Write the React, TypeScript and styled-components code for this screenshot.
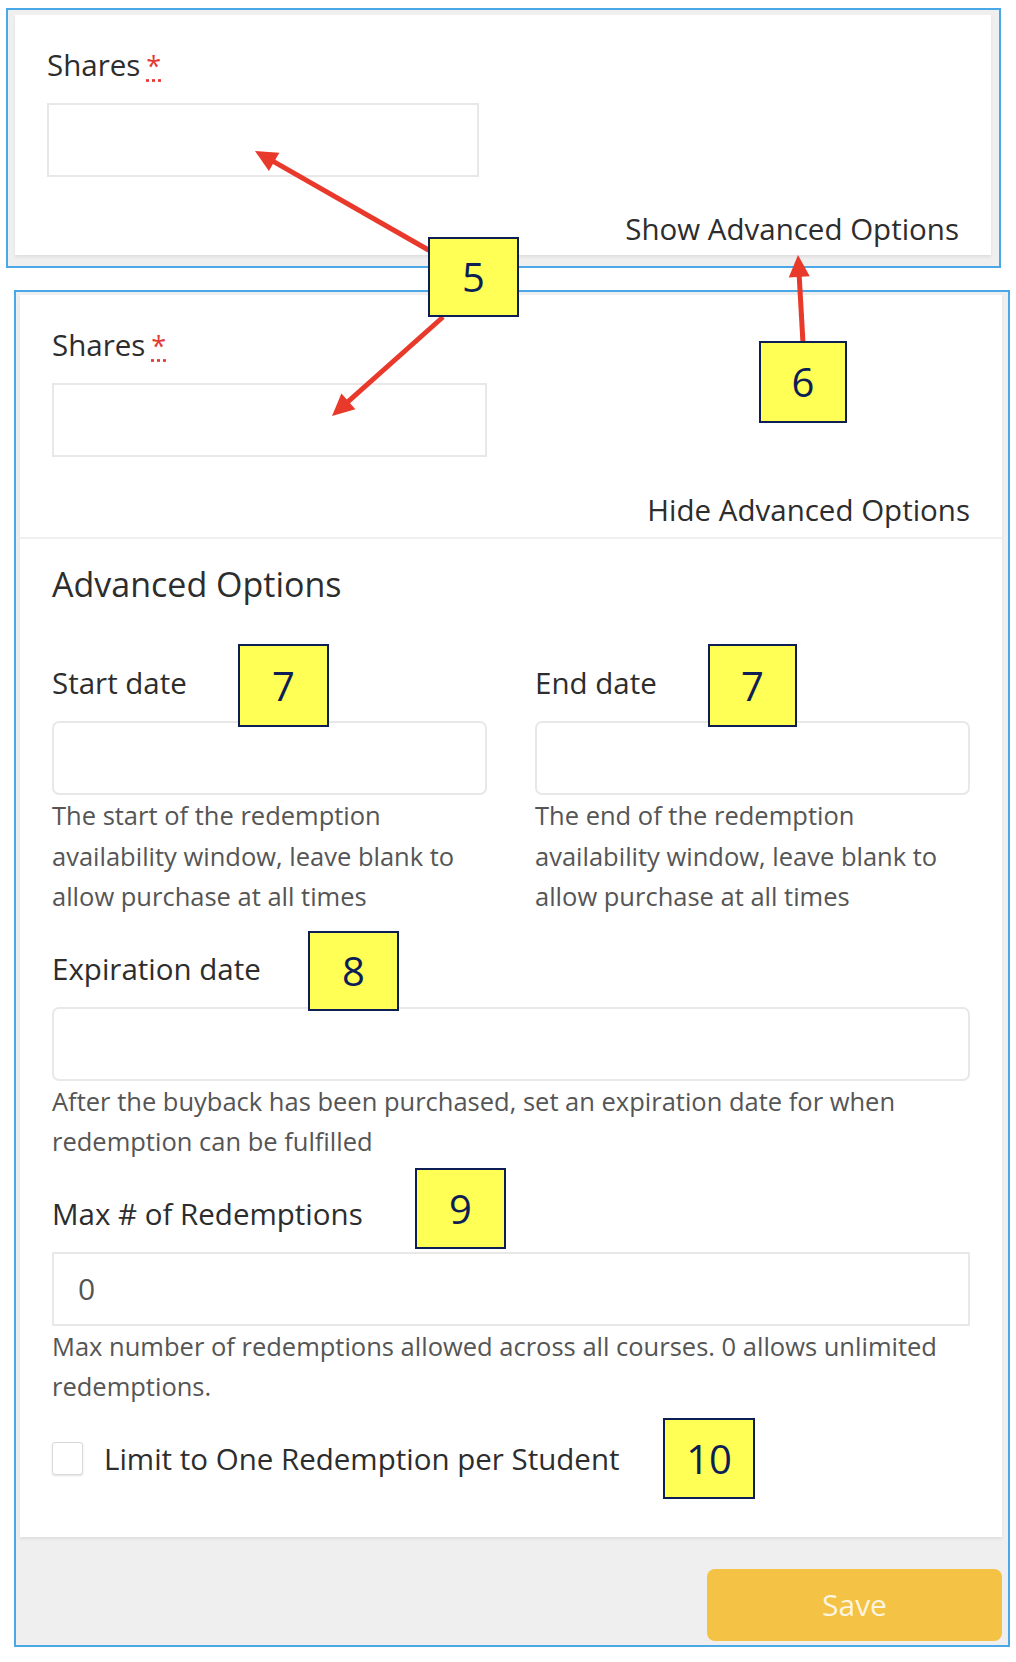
import styled, { createGlobalStyle } from "styled-components";

const GlobalStyle = createGlobalStyle`
    * { box-sizing: border-box; }
    body {
        margin: 0;
        background: #fff;
        font-family: "Open Sans", "Noto Sans", sans-serif;
        color: #2d2d2d;
    }
`;

const Page = styled.div`
    position: relative;
    width: 1016px;
    min-height: 1662px;
    padding-top: 8px;
`;

const Shot = styled.section<{ $left: number; $width: number; $pad: string }>`
    margin-left: ${p => p.$left}px;
    width: ${p => p.$width}px;
    border: 2px solid #4ba8e6;
    background: #efefef;
    padding: ${p => p.$pad};
    & + & {
        margin-top: 22px;
    }
`;

const Card = styled.div`
    background: #fff;
    box-shadow: 0 2px 3px rgba(0, 0, 0, 0.07);
`;

const Section = styled.div<{ $divided?: boolean; $pad: string }>`
    padding: ${p => p.$pad};
    ${p => p.$divided && `border-bottom: 2px solid #f0f0f0;`}
`;

const Field = styled.div<{ $half?: boolean }>`
    width: ${p => (p.$half ? "calc((100% - 48px) / 2)" : "100%")};
`;

const Label = styled.label`
    display: block;
    height: 40px;
    font-size: 29.5px;
    line-height: 40px;
    margin-bottom: 18px;
    color: #2d2d2d;
`;

const Required = styled.abbr`
    color: #e53935;
    font-size: 27px;
    line-height: 0;
    margin-left: 6px;
    text-decoration: underline dotted;
    text-underline-offset: 3px;
    cursor: help;
`;

const Input = styled.input<{ $rounded?: boolean }>`
    display: block;
    width: 100%;
    height: 74px;
    border: 2px solid #e8e8e8;
    border-radius: ${p => (p.$rounded ? "7px" : "0")};
    background: #fff;
    padding: 0 24px;
    font-family: inherit;
    font-size: 30px;
    color: #555;
    outline: none;
`;

const Help = styled.p`
    margin: 0;
    font-size: 25.5px;
    line-height: 40.5px;
    color: #555;
`;

const ToggleLink = styled.div<{ $gap: number }>`
    margin-top: ${p => p.$gap}px;
    text-align: right;
    font-size: 29.5px;
    line-height: 40px;
    color: #2d2d2d;
    cursor: pointer;
`;

const Heading = styled.h3`
    margin: 0 0 56px;
    font-size: 34px;
    line-height: 46px;
    font-weight: 400;
    color: #2d2d2d;
`;

const TwoCol = styled.div`
    display: grid;
    grid-template-columns: 1fr 1fr;
    column-gap: 48px;
    margin-bottom: 32px;
`;

const Group = styled.div`
    margin-bottom: 32px;
`;

const CheckRow = styled.label`
    display: flex;
    align-items: center;
    gap: 21px;
    height: 40px;
    font-size: 29.5px;
    color: #2d2d2d;
`;

const CheckBox = styled.span`
    width: 31px;
    height: 33px;
    background: #fff;
    border: 1px solid #d9d9d9;
    border-radius: 3px;
    box-shadow: 0 1px 2px rgba(0, 0, 0, 0.12);
`;

const Footer = styled.div`
    display: flex;
    justify-content: flex-end;
    padding-top: 32px;
`;

const SaveButton = styled.button`
    width: 295px;
    height: 72px;
    border: 0;
    border-radius: 8px;
    background: #f4c244;
    color: rgba(255, 255, 255, 0.85);
    font-family: inherit;
    font-size: 30px;
    cursor: pointer;
`;

const Overlay = styled.svg`
    position: absolute;
    left: 0;
    top: 0;
    pointer-events: none;
`;

const Callout = styled.div<{ $x: number; $y: number; $w: number; $h: number }>`
    position: absolute;
    left: ${p => p.$x}px;
    top: ${p => p.$y}px;
    width: ${p => p.$w}px;
    height: ${p => p.$h}px;
    display: flex;
    align-items: center;
    justify-content: center;
    background: #ffff55;
    border: 2px solid #0d1e55;
    color: #0d1e55;
    font-family: "Open Sans", "Noto Sans", sans-serif;
    font-size: 40px;
    line-height: 1;
`;

const callouts = [
    { n: "5", x: 428, y: 237, w: 91, h: 80 },
    { n: "6", x: 759, y: 341, w: 88, h: 82 },
    { n: "7", x: 238, y: 644, w: 91, h: 83 },
    { n: "7", x: 708, y: 644, w: 89, h: 83 },
    { n: "8", x: 308, y: 931, w: 91, h: 80 },
    { n: "9", x: 415, y: 1168, w: 91, h: 81 },
    { n: "10", x: 663, y: 1418, w: 92, h: 81 },
];

const arrows = [
    { x1: 432, y1: 252, x2: 255, y2: 151 },
    { x1: 443, y1: 317, x2: 332, y2: 416 },
    { x1: 803, y1: 343, x2: 798, y2: 255 },
];

function Arrow({ x1, y1, x2, y2 }: { x1: number; y1: number; x2: number; y2: number }) {
    const len = 22;
    const half = 10.5;
    const d = Math.hypot(x2 - x1, y2 - y1);
    const ux = (x2 - x1) / d;
    const uy = (y2 - y1) / d;
    const bx = x2 - ux * len;
    const by = y2 - uy * len;
    const points = `${x2},${y2} ${bx - uy * half},${by + ux * half} ${bx + uy * half},${by - ux * half}`;
    return (
        <g>
            <line x1={x1} y1={y1} x2={bx + ux * 2} y2={by + uy * 2} stroke="#e8392b" strokeWidth={5} />
            <polygon points={points} fill="#e8392b" />
        </g>
    );
}

function SharesField() {
    return (
        <Field $half>
            <Label>
                Shares<Required title="required">*</Required>
            </Label>
            <Input />
        </Field>
    );
}

export default function App() {
    return (
        <>
            <GlobalStyle />
            <Page>
                <Shot $left={6} $width={995} $pad="5px 8px 11px 7px">
                    <Card>
                        <Section $pad="30px 32px 6px">
                            <SharesField />
                            <ToggleLink $gap={32}>Show Advanced Options</ToggleLink>
                        </Section>
                    </Card>
                </Shot>

                <Shot $left={14} $width={996} $pad="3px 6px 4px 4px">
                    <Card>
                        <Section $divided $pad="30px 32px 7px">
                            <SharesField />
                            <ToggleLink $gap={33}>Hide Advanced Options</ToggleLink>
                        </Section>
                        <Section $pad="22px 32px 58px">
                            <Heading>Advanced Options</Heading>
                            <TwoCol>
                                <Field>
                                    <Label>Start date</Label>
                                    <Input $rounded />
                                    <Help>The start of the redemption availability window, leave blank to allow purchase at all times</Help>
                                </Field>
                                <Field>
                                    <Label>End date</Label>
                                    <Input $rounded />
                                    <Help>The end of the redemption availability window, leave blank to allow purchase at all times</Help>
                                </Field>
                            </TwoCol>
                            <Group>
                                <Label>Expiration date</Label>
                                <Input $rounded />
                                <Help>After the buyback has been purchased, set an expiration date for when redemption can be fulfilled</Help>
                            </Group>
                            <Group>
                                <Label>Max # of Redemptions</Label>
                                <Input defaultValue="0" />
                                <Help>Max number of redemptions allowed across all courses. 0 allows unlimited redemptions.</Help>
                            </Group>
                            <CheckRow>
                                <CheckBox />
                                Limit to One Redemption per Student
                            </CheckRow>
                        </Section>
                    </Card>
                    <Footer>
                        <SaveButton>Save</SaveButton>
                    </Footer>
                </Shot>

                <Overlay width={1016} height={1662}>
                    {arrows.map((a, i) => <Arrow key={i} {...a} />)}
                </Overlay>
                {callouts.map((c, i) => (
                    <Callout key={i} $x={c.x} $y={c.y} $w={c.w} $h={c.h}>{c.n}</Callout>
                ))}
            </Page>
        </>
    );
}
